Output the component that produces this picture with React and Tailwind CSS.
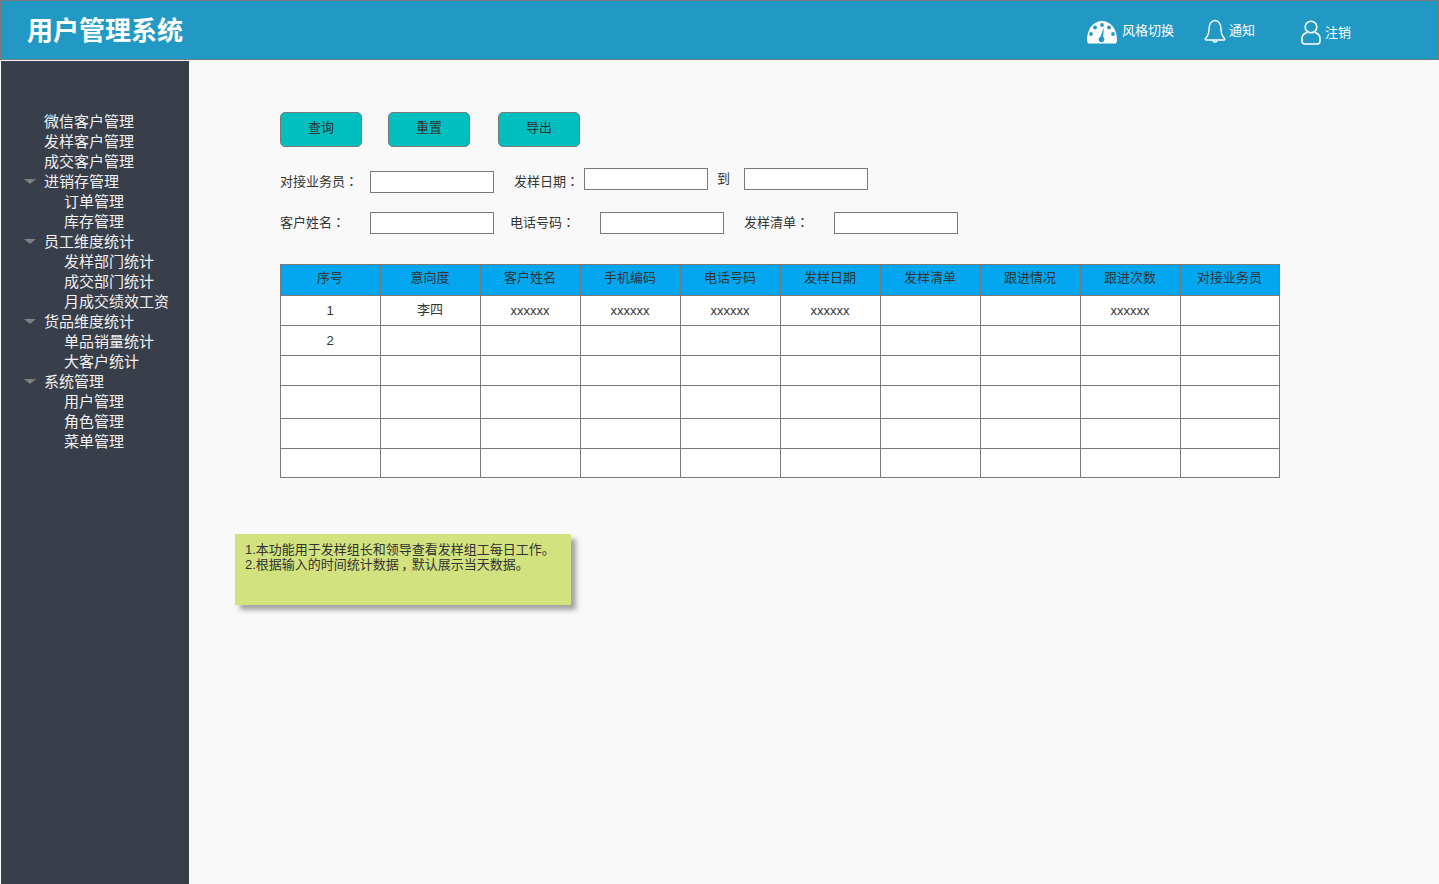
import React from 'react';

const menu = [
  { label: '微信客户管理' },
  { label: '发样客户管理' },
  { label: '成交客户管理' },
  { label: '进销存管理', open: true },
  { label: '订单管理', sub: true },
  { label: '库存管理', sub: true },
  { label: '员工维度统计', open: true },
  { label: '发样部门统计', sub: true },
  { label: '成交部门统计', sub: true },
  { label: '月成交绩效工资', sub: true },
  { label: '货品维度统计', open: true },
  { label: '单品销量统计', sub: true },
  { label: '大客户统计', sub: true },
  { label: '系统管理', open: true },
  { label: '用户管理', sub: true },
  { label: '角色管理', sub: true },
  { label: '菜单管理', sub: true },
];

const columns = ['序号', '意向度', '客户姓名', '手机编码', '电话号码', '发样日期', '发样清单', '跟进情况', '跟进次数', '对接业务员'];

const rows = [
  { height: 'h-[30px]', cells: ['1', '李四', 'xxxxxx', 'xxxxxx', 'xxxxxx', 'xxxxxx', '', '', 'xxxxxx', ''] },
  { height: 'h-[30px]', cells: ['2', '', '', '', '', '', '', '', '', ''] },
  { height: 'h-[30px]', cells: Array(10).fill('') },
  { height: 'h-[33px]', cells: Array(10).fill('') },
  { height: 'h-[30px]', cells: Array(10).fill('') },
  { height: 'h-[30px]', cells: Array(10).fill('') },
];

const GaugeIcon = () => (
  <svg width="30" height="24" viewBox="0 0 30 24" aria-hidden="true">
    <path d="M0 19.500C0 9 6.700 1 15 1s15 8 15 18.500c0 1.600-.4 3-1.200 4H1.200C.4 22.500 0 21.100 0 19.500z" fill="#fff" />
    <circle cx="15" cy="5" r="1.900" fill="#2199c4" />
    <circle cx="8" cy="7.500" r="1.900" fill="#2199c4" />
    <circle cx="22" cy="7.500" r="1.900" fill="#2199c4" />
    <circle cx="4" cy="14" r="1.900" fill="#2199c4" />
    <circle cx="26" cy="14" r="1.900" fill="#2199c4" />
    <path d="M16.800 7.500l-.6 9.500a2.900 2.900 0 1 1-2.800-.3z" fill="#2199c4" />
  </svg>
);

const BellIcon = () => (
  <svg width="22" height="25" viewBox="0 0 22 25" fill="none" stroke="#fff" strokeWidth="1.400" aria-hidden="true">
    <path d="M11 1.500C7.500 1.500 5 5 5 10c0 4.500-1 7-3.500 9.500-.6.6-.2 1.500.6 1.500h17.800c.8 0 1.200-.9.6-1.500C18 17 17 14.500 17 10c0-5-2.500-8.500-6-8.500z" />
    <path d="M8.800 21.500a2.300 2.300 0 0 0 4.400 0" />
  </svg>
);

const UserIcon = () => (
  <svg width="20" height="25" viewBox="0 0 20 25" fill="none" stroke="#fff" strokeWidth="1.600" aria-hidden="true">
    <circle cx="10" cy="7" r="5.800" />
    <path d="M6 12.500C3 13.500 1 15.500 1 18.500v2.500c0 1.800 1.200 3 3 3h12c1.800 0 3-1.200 3-3v-2.500c0-3-2-5-5-6" />
  </svg>
);

const Field = ({ className = '' }) => (
  <input type="text" className={`w-[124px] h-[22px] bg-white border border-[#797979] ${className}`} />
);

// the TC face centres the full-width colon, the SC one does not
const Colon = () => <span className="font-['Noto_Sans_CJK_TC'] leading-none">：</span>;

const ActionButton = ({ children, className = '' }) => (
  <button
    type="button"
    className={`w-[82px] h-[35px] pb-[3px] bg-[#00bfbf] border border-[#797979] rounded-[5px] text-[13px] text-[#333] ${className}`}
  >
    {children}
  </button>
);

export default function App() {
  return (
    <div className="h-[884px] overflow-hidden flex flex-col bg-[#f9f9f9] text-[#333] font-['Liberation_Sans','Noto_Sans_CJK_SC',sans-serif]">
      <header className="h-[60px] shrink-0 flex items-center bg-[#2199c4] border border-[#797979] text-white">
        <h1 className="ml-[26px] mt-[2px] text-[26px] font-bold leading-none">用户管理系统</h1>
        <div className="ml-auto flex items-center mr-[87px] mt-[3px] text-[13px]">
          <div className="flex items-center gap-[5px]">
            <GaugeIcon />
            <span className="-mt-[2px]">风格切换</span>
          </div>
          <div className="flex items-center ml-[30px]">
            <BellIcon />
            <span className="-mt-[2px] ml-[3px]">通知</span>
          </div>
          <div className="flex items-center gap-[4px] ml-[46px]">
            <div className="mt-[2px]">
              <UserIcon />
            </div>
            <span className="mt-[3px]">注销</span>
          </div>
        </div>
      </header>

      <div className="flex flex-1 pt-[1px] pl-[1px]">
        <aside className="w-[188px] shrink-0 bg-[#393e4b] pt-[51px] text-[15px] leading-[20px] text-[#f2f2f2]">
          {menu.map((item) => (
            <div key={item.label} className={`flex items-center h-[20px] relative ${item.sub ? 'pl-[63px]' : 'pl-[43px]'}`}>
              {item.open && (
                <span className="absolute left-[23px] top-[7px] w-0 h-0 border-x-[6px] border-x-transparent border-t-[5px] border-t-[#7f7f7f]" />
              )}
              {item.label}
            </div>
          ))}
        </aside>

        <main className="flex-1 pl-[46px] pt-[51px] text-[13px]">
          <div className="ml-[45px] flex">
            <ActionButton>查询</ActionButton>
            <ActionButton className="ml-[26px]">重置</ActionButton>
            <ActionButton className="ml-[28px]">导出</ActionButton>
          </div>

          <div className="ml-[45px] mt-[21px] flex items-start h-[25px]">
            <span className="w-[90px] mt-[3px] leading-[22px]">对接业务员<Colon /></span>
            <Field className="mt-[3px]" />
            <span className="w-[70px] ml-[20px] mt-[3px] leading-[22px]">发样日期<Colon /></span>
            <Field />
            <span className="w-[27px] ml-[9px] leading-[22px]">到</span>
            <Field />
          </div>

          <div className="ml-[45px] mt-[19px] flex items-center h-[22px]">
            <span className="w-[90px]">客户姓名<Colon /></span>
            <Field />
            <span className="w-[90px] ml-[16px]">电话号码<Colon /></span>
            <Field />
            <span className="w-[90px] ml-[20px]">发样清单<Colon /></span>
            <Field />
          </div>

          <table className="ml-[45px] mt-[30px] w-[1000px] table-fixed border-separate border-spacing-0">
            <thead>
              <tr className="h-[31px] bg-[#02a7f0]">
                {columns.map((col) => (
                  <th key={col} className="border-l border-t border-[#797979] last:border-r pb-[4px] pr-[1px] font-normal">{col}</th>
                ))}
              </tr>
            </thead>
            <tbody className="bg-white">
              {rows.map((row, i) => (
                <tr key={i} className={row.height}>
                  {row.cells.map((cell, j) => (
                    <td
                      key={j}
                      className={`border-l border-t border-[#797979] last:border-r pr-[1px] text-center ${i === rows.length - 1 ? 'border-b' : ''} ${cell === '李四' ? 'pb-[2px]' : ''}`}
                    >
                      {cell}
                    </td>
                  ))}
                </tr>
              ))}
            </tbody>
          </table>

          <div className="mt-[56px] w-[336px] h-[71px] px-[10px] pt-[8px] bg-[#d2e27e] text-[13px] leading-[15px] shadow-[5px_5px_5px_rgba(0,0,0,0.35)]">
            <p>1.本功能用于发样组长和领导查看发样组工每日工作。</p>
            <p>2.根据输入的时间统计数据<span className="inline-block w-[13px] text-center [font-feature-settings:'palt']">，</span>默认展示当天数据。</p>
          </div>
        </main>
      </div>
    </div>
  );
}
